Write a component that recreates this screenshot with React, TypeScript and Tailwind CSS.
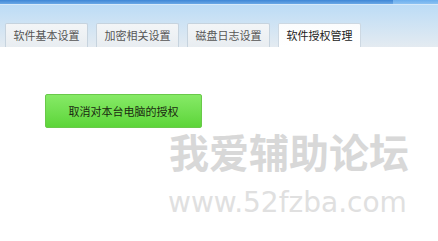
import React from "react";

const tabs = ["软件基本设置", "加密相关设置", "磁盘日志设置", "软件授权管理"];

export default function App() {
  const font = { fontFamily: '"Noto Sans CJK SC", "Liberation Sans", sans-serif' };
  return (
    <div className="w-[438px] h-[241px] bg-white overflow-hidden flex flex-col" style={font}>
      <div className="flex h-[4px]">
        <div className="w-[393px] bg-gradient-to-b from-[#3d86d6] to-[#6aa8e6]" />
        <div className="flex-1 bg-gradient-to-b from-[#6aaeee] to-[#8cc2f2]" />
      </div>
      <div className="h-[43px] bg-gradient-to-b from-[#bcdcf6] to-[#e4ebf1] border-t border-[#d6e9f9] flex items-end pl-[5px] gap-[8px]">
        {tabs.map((t, i) => {
          const active = i === 3;
          return (
            <div
              key={t}
              className={
                "w-[83px] h-[24px] rounded-t-[2px] border border-b-0 flex items-center justify-center text-[11px] leading-none " +
                (active
                  ? "bg-gradient-to-b from-[#fbfcfd] to-white border-[#cdd8e2] text-[#222]"
                  : "bg-gradient-to-b from-[#f3f5f7] to-[#e8edf1] border-[#c6d3de] text-[#555]")
              }
            >
              {t}
            </div>
          );
        })}
      </div>
      <div className="flex flex-col pt-[47px] pl-[45px]">
        <div className="w-[157px] h-[34px] rounded-[2px] border border-[#69c94a] bg-gradient-to-b from-[#86ea66] to-[#5cd538] flex items-center justify-center text-[11px] text-[#1a2a10] leading-none">
          取消对本台电脑的授权
        </div>
        <div className="flex flex-col items-start pl-[124px] pt-[3px]">
          <div
            className="text-[40px] font-bold leading-none text-[#d8d8d8]"
            style={{ fontFamily: '"Noto Sans CJK SC", sans-serif' }}
          >
            我爱辅助论坛
          </div>
          <div
            className="text-[28px] leading-none text-[#e0e0e0] mt-[18px] -ml-[1px]"
            style={{ fontFamily: '"DejaVu Sans", sans-serif' }}
          >
            www.52fzba.com
          </div>
        </div>
      </div>
    </div>
  );
}
